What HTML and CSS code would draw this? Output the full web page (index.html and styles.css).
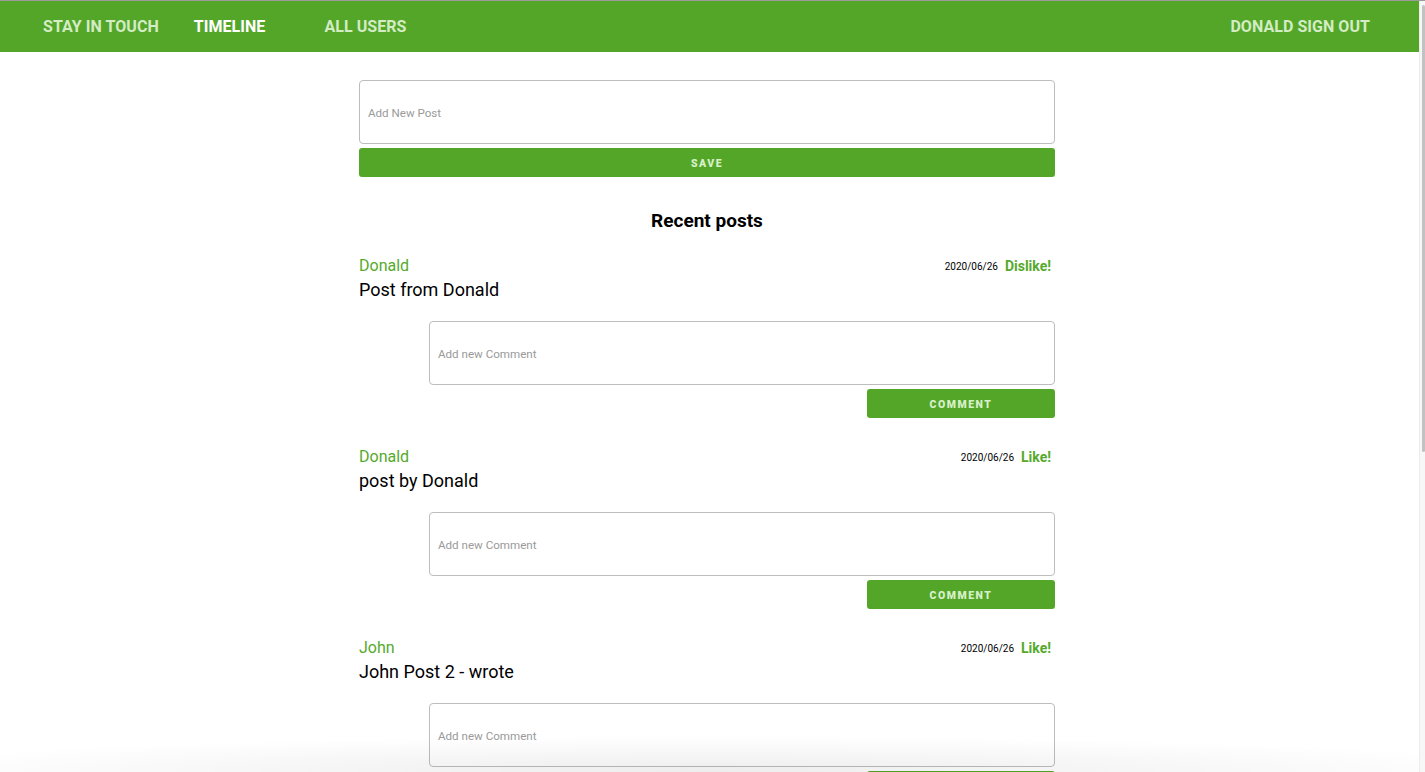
FILE: index.html
```html
<!DOCTYPE html>
<html>
<head>
<meta charset="utf-8">
<link rel="stylesheet" href="styles.css">
</head>
<body>
<div class="topline"></div>
<div class="frame">
  <div class="page">
    <nav class="nav">
      <a class="nav-item nav-brand">STAY IN TOUCH</a>
      <a class="nav-item nav-active nav-timeline">TIMELINE</a>
      <a class="nav-item nav-users">ALL USERS</a>
      <a class="nav-item nav-right">DONALD SIGN OUT</a>
    </nav>
    <main class="main">
      <div class="container">
        <div class="field post-field"><span class="placeholder">Add New Post</span></div>
        <button class="btn btn-full">SAVE</button>
        <h2 class="heading">Recent posts</h2>

        <div class="post">
          <div class="post-head">
            <span class="author">Donald</span>
            <span class="meta"><span class="date">2020/06/26</span><span class="like">Dislike!</span></span>
          </div>
          <div class="content">Post from Donald</div>
          <div class="comment-area">
            <div class="field comment-field"><span class="placeholder">Add new Comment</span></div>
            <button class="btn btn-comment">COMMENT</button>
          </div>
        </div>

        <div class="post">
          <div class="post-head">
            <span class="author">Donald</span>
            <span class="meta"><span class="date">2020/06/26</span><span class="like">Like!</span></span>
          </div>
          <div class="content">post by Donald</div>
          <div class="comment-area">
            <div class="field comment-field"><span class="placeholder">Add new Comment</span></div>
            <button class="btn btn-comment">COMMENT</button>
          </div>
        </div>

        <div class="post">
          <div class="post-head">
            <span class="author">John</span>
            <span class="meta"><span class="date">2020/06/26</span><span class="like">Like!</span></span>
          </div>
          <div class="content">John Post 2 - wrote</div>
          <div class="comment-area">
            <div class="field comment-field"><span class="placeholder">Add new Comment</span></div>
            <button class="btn btn-comment">COMMENT</button>
          </div>
        </div>
      </div>
    </main>
    <div class="bottom-shade"></div>
  </div>
  <div class="scrollbar"><div class="thumb"></div></div>
</div>
</body>
</html>
```
FILE: styles.css
```css
* { box-sizing: border-box; }
html, body {
  margin: 0;
  height: 772px;
  overflow: hidden;
  background: #fff;
  font-family: Roboto, "Liberation Sans", sans-serif;
}
.topline { height: 1px; background: #9b9b9b; }
.frame { display: flex; height: 771px; }
.page { flex: 1; position: relative; overflow: hidden; }
.scrollbar {
  width: 6px;
  background: #f7f7f7;
  border-left: 1px solid #ececec;
  padding-top: 4px;
  padding-left: 2px;
}
.thumb { width: 3px; height: 447px; background: #c2c2c2; border-radius: 2px; }

.nav {
  height: 51px;
  background: #54a628;
  display: flex;
  align-items: center;
  padding: 0 49px 0 43px;
}
.nav-item {
  font-weight: 700;
  font-size: 16px;
  color: #d3ecc5;
  text-transform: uppercase;
  letter-spacing: 0.05px;
}
.nav-active { color: #fff; }
.nav-timeline { margin-left: 35px; }
.nav-users { margin-left: 59px; }
.nav-right { margin-left: auto; }

.main { padding-right: 5px; }
.container { width: 696px; margin: 0 auto; padding-top: 28px; }

.field {
  border: 1px solid #bdbdbd;
  border-radius: 4px;
  height: 64px;
  display: flex;
  align-items: center;
  padding-left: 8px;
  padding-top: 1px;
  background: #fff;
}
.placeholder { font-size: 11.6px; color: #9a9a9a; }

.btn {
  display: block;
  border: none;
  background: #54a628;
  color: #d8f0c8;
  font-family: Roboto, "Liberation Sans", sans-serif;
  font-weight: 900;
  font-size: 10.5px;
  letter-spacing: 1.5px;
  height: 29px;
  border-radius: 3px;
  padding: 1px 0 0;
}
.btn-full { width: 100%; margin-top: 4px; }

.heading {
  margin: 33px 0 0;
  text-align: center;
  font-size: 19px;
  font-weight: 700;
  color: #000;
  line-height: 22px;
}

.post { padding-top: 23px; padding-bottom: 28px; }
.post + .post { padding-top: 0; }
.post-head { display: flex; justify-content: space-between; align-items: center; height: 20px; }
.author { font-size: 16px; color: #55aa2c; }
.meta { display: flex; align-items: center; padding-right: 4px; padding-top: 2px; }
.date { font-size: 10px; color: #000; margin-right: 7px; }
.like { font-size: 14px; font-weight: 700; color: #55aa2c; }
.content { font-size: 18px; color: #000; line-height: 22px; margin-top: 4px; }
.comment-area { margin-left: 70px; margin-top: 20px; display: flex; flex-direction: column; align-items: flex-end; }
.comment-field { width: 100%; }
.btn-comment { width: 188px; margin-top: 4px; }

.bottom-shade {
  position: absolute;
  left: 0; right: 0; bottom: 0;
  height: 36px;
  background: radial-gradient(ellipse 60% 100% at 50% 100%, rgba(0,0,0,0.07), rgba(0,0,0,0) 100%);
  pointer-events: none;
}
```
